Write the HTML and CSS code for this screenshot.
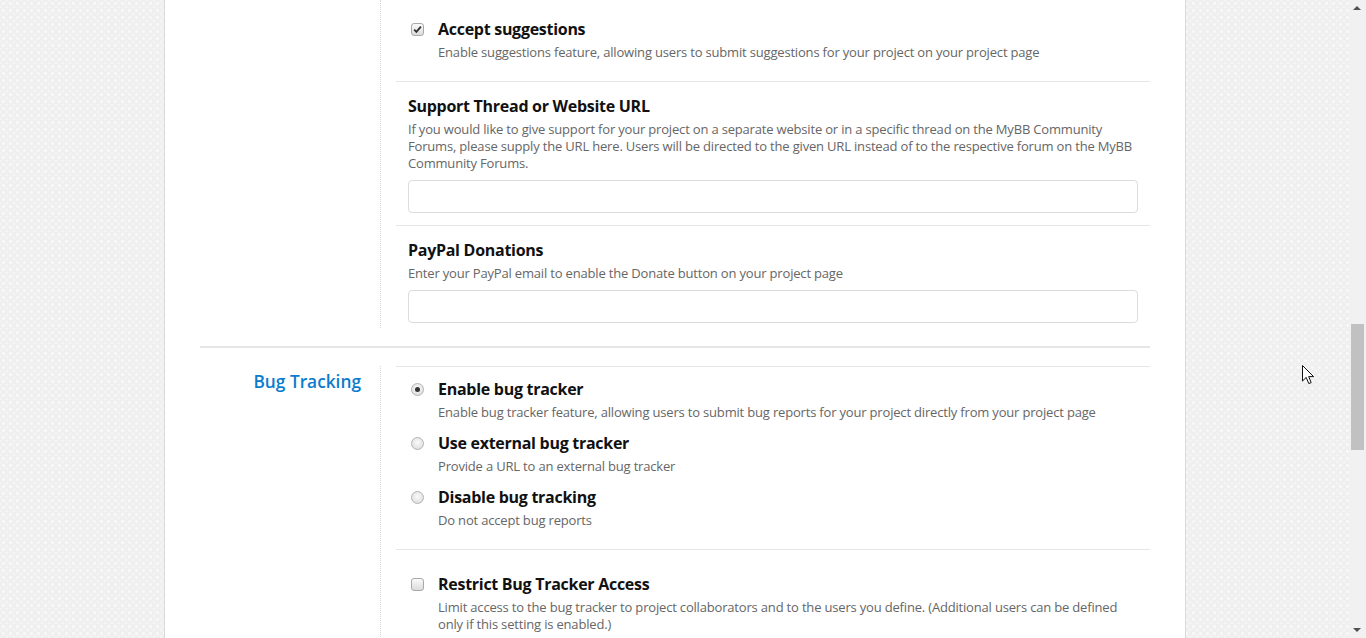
FILE: index.html
```html
<!DOCTYPE html>
<html lang="en">
<head>
<meta charset="utf-8">
<title>Project settings</title>
<link rel="stylesheet" href="styles.css">
</head>
<body>
<div class="viewport">
  <div class="page">
    <div class="form">
      <section class="section first">
        <div class="label-col"></div>
        <div class="fields">
          <div class="item option-item top-cut">
            <div class="option">
              <span class="checkbox checked"><svg viewBox="0 0 13 13" width="13" height="13"><path d="M3.2 6.6 L5.4 8.9 L9.9 3.6" fill="none" stroke="#333" stroke-width="1.8"/></svg></span>
              <div class="option-text">
                <div class="title">Accept suggestions</div>
                <div class="desc">Enable suggestions feature, allowing users to submit suggestions for your project on your project page</div>
              </div>
            </div>
          </div>
          <div class="item field-item">
            <div class="title">Support Thread or Website URL</div>
            <div class="desc">If you would like to give support for your project on a separate website or in a specific thread on the MyBB Community Forums, please supply the URL here. Users will be directed to the given URL instead of to the respective forum on the MyBB Community Forums.</div>
            <input class="text-input" type="text">
          </div>
          <div class="item field-item last">
            <div class="title">PayPal Donations</div>
            <div class="desc">Enter your PayPal email to enable the Donate button on your project page</div>
            <input class="text-input" type="text">
          </div>
        </div>
      </section>
      <section class="section second">
        <div class="label-col"><h2 class="section-label">Bug Tracking</h2></div>
        <div class="fields">
          <div class="item option-item radio-group">
            <div class="option">
              <span class="radio selected"></span>
              <div class="option-text">
                <div class="title">Enable bug tracker</div>
                <div class="desc">Enable bug tracker feature, allowing users to submit bug reports for your project directly from your project page</div>
              </div>
            </div>
            <div class="option">
              <span class="radio"></span>
              <div class="option-text">
                <div class="title">Use external bug tracker</div>
                <div class="desc">Provide a URL to an external bug tracker</div>
              </div>
            </div>
            <div class="option">
              <span class="radio"></span>
              <div class="option-text">
                <div class="title">Disable bug tracking</div>
                <div class="desc">Do not accept bug reports</div>
              </div>
            </div>
          </div>
          <div class="item option-item">
            <div class="option">
              <span class="checkbox"></span>
              <div class="option-text">
                <div class="title">Restrict Bug Tracker Access</div>
                <div class="desc">Limit access to the bug tracker to project collaborators and to the users you define. (Additional users can be defined only if this setting is enabled.)</div>
              </div>
            </div>
          </div>
        </div>
      </section>
    </div>
  </div>
</div>
<div class="scrollbar">
  <span class="sb-arrow up"></span>
  <span class="sb-thumb"></span>
  <span class="sb-arrow down"></span>
</div>
<svg class="cursor" width="13" height="20" viewBox="0 0 13 20"><path d="M0.5 0.5 L0.5 16 L4.2 12.4 L6.8 18.6 L9.2 17.6 L6.7 11.6 L11.6 11.6 Z" fill="#fff" stroke="#111" stroke-width="1" stroke-linejoin="miter"/></svg>
</body>
</html>
```

FILE: styles.css
```css
html, body {
  margin: 0;
  padding: 0;
  height: 100%;
  overflow: hidden;
}

body {
  font-family: "Open Sans", "Liberation Sans", sans-serif;
  background-color: #efefef;
  background-image:
    radial-gradient(circle at 50% 50%, #f8f8f8 0 1.3px, transparent 1.8px),
    radial-gradient(circle at 50% 50%, #f6f6f6 0 1px, transparent 1.5px);
  background-size: 7px 7px, 7px 7px;
  background-position: 0 0, 3.5px 3.5px;
  position: relative;
}

.viewport {
  width: calc(100% - 17px);
  height: 100%;
  box-sizing: border-box;
  padding-left: 1px;
  display: flex;
  justify-content: center;
}

.page {
  width: 950px;
  background: #fff;
  border-left: 1px solid #d9d9d9;
  border-right: 1px solid #d9d9d9;
  padding: 0 35px;
  box-sizing: content-box;
}

.section {
  display: grid;
  grid-template-columns: 181px 1fr;
}

.section.first {
  padding-bottom: 18px;
  border-bottom: 2px solid #e6e6e6;
}

.section.second {
  padding-top: 18px;
}

.label-col {
  border-right: 1px dotted #d6d6d6;
  text-align: right;
  padding-right: 19px;
}

.section-label {
  margin: 4px 0 0;
  font-size: 17.3px;
  line-height: 24px;
  font-weight: 600;
  color: #0b7ccc;
}

.fields {
  padding-left: 15px;
}

.item {
  border-top: 1px solid #e6e6e6;
  padding: 13px 12px 12px;
}

.item.top-cut {
  border-top: none;
  padding-top: 18px;
  padding-bottom: 20px;
}

.item.last {
  padding-bottom: 5px;
}

.option-item {
  padding-top: 23px;
  padding-bottom: 20px;
}

.radio-group {
  padding-top: 11px;
  padding-bottom: 20px;
}

.option {
  display: flex;
  align-items: flex-start;
  gap: 14px;
}

.option + .option {
  margin-top: 11px;
}

.option-text {
  flex: 1;
}

.title {
  font-size: 16px;
  line-height: 22px;
  font-weight: 700;
  letter-spacing: -0.28px;
  color: #111;
  margin-bottom: 4px;
}

.desc {
  font-size: 13px;
  line-height: 17px;
  letter-spacing: -0.18px;
  color: #666;
}

.text-input {
  display: block;
  width: 100%;
  box-sizing: border-box;
  height: 33px;
  margin-top: 8px;
  border: 1px solid #dcdcdc;
  border-radius: 4px;
  background: #fff;
  font: inherit;
}

.checkbox,
.radio {
  flex: none;
  width: 13px;
  height: 13px;
  box-sizing: border-box;
  margin: 5px 0 0 3px;
  border: 1px solid #a9a9a9;
  background: linear-gradient(#fafafa, #dcdcdc);
  position: relative;
}

.checkbox {
  border-radius: 3px;
}

.checkbox svg {
  position: absolute;
  left: -1px;
  top: -1px;
}

.radio {
  border-radius: 50%;
  border-color: #b3b3b3;
  background: radial-gradient(circle at 50% 40%, #fafafa, #d8d8d8);
}

.radio.selected::after {
  content: "";
  position: absolute;
  left: 3px;
  top: 3px;
  width: 5px;
  height: 5px;
  border-radius: 50%;
  background: #333;
}

.scrollbar {
  position: absolute;
  top: 0;
  right: 0;
  width: 17px;
  height: 100%;
  background: #f1f1f1;
}

.sb-thumb {
  position: absolute;
  left: 2px;
  width: 13px;
  top: 324px;
  height: 126px;
  background: #c1c1c1;
}

.sb-arrow {
  position: absolute;
  left: 4px;
  width: 0;
  height: 0;
  border-left: 4px solid transparent;
  border-right: 4px solid transparent;
}

.sb-arrow.up {
  top: 6px;
  border-bottom: 4px solid #505050;
}

.sb-arrow.down {
  bottom: 6px;
  border-top: 4px solid #505050;
}

.cursor {
  position: absolute;
  left: 1302px;
  top: 365px;
}
```
